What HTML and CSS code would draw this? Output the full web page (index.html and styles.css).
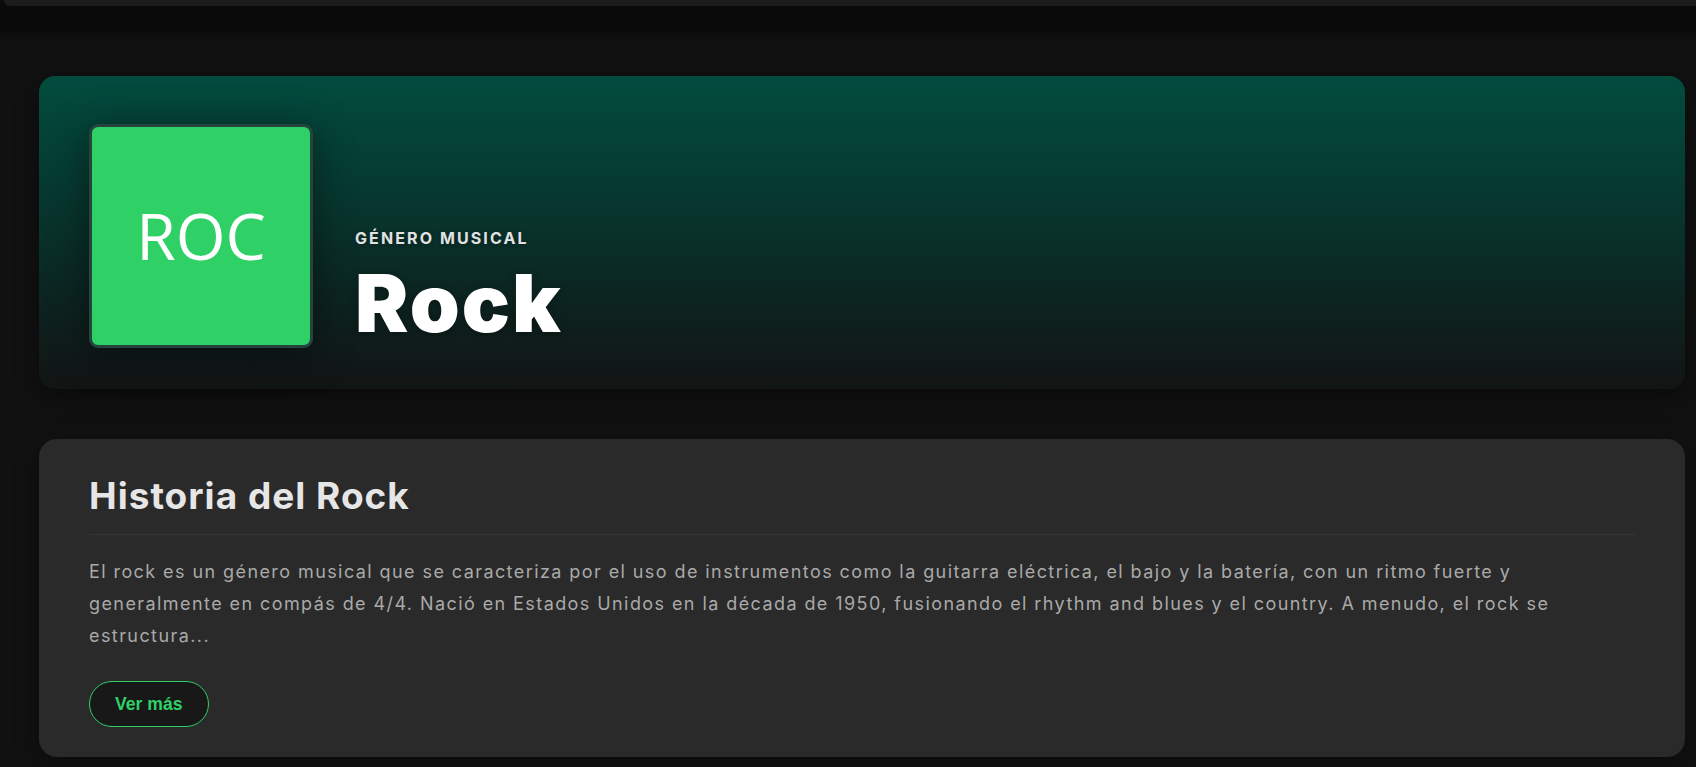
FILE: index.html
```html
<!DOCTYPE html>
<html lang="es">
<head>
<meta charset="utf-8">
<title>Rock - Género musical</title>
<link rel="stylesheet" href="styles.css">
</head>
<body>
<header class="topbar"></header>
<main class="content">
  <section class="hero">
    <div class="cover"><span class="cover-text">ROC</span></div>
    <div class="hero-info">
      <p class="hero-label">GÉNERO MUSICAL</p>
      <h1 class="hero-title">Rock</h1>
    </div>
  </section>
  <section class="card">
    <h2 class="card-title">Historia del Rock</h2>
    <p class="card-text">El rock es un género musical que se caracteriza por el uso de instrumentos como la guitarra eléctrica, el bajo y la batería, con un ritmo fuerte y generalmente en compás de 4/4. Nació en Estados Unidos en la década de 1950, fusionando el rhythm and blues y el country. A menudo, el rock se estructura...</p>
    <button class="btn-more" type="button">Ver más</button>
  </section>
</main>
</body>
</html>
```

FILE: styles.css
```css
html, body {
  margin: 0;
  padding: 0;
}

body {
  background: #111111;
  font-family: Inter, "Open Sans", sans-serif;
  height: 767px;
  overflow: hidden;
}

.topbar {
  height: 6px;
  margin-left: 4px;
  background: #1c1c1c;
  border-bottom-left-radius: 10px;
  box-shadow: 0 15px 8px 15px rgba(0, 0, 0, 0.4);
  position: relative;
  z-index: 1;
}

.content {
  padding: 70px 11px 0 39px;
  display: flex;
  flex-direction: column;
  gap: 50px;
}

.hero {
  height: 313px;
  box-sizing: border-box;
  padding: 48px 50px 41px 50px;
  border-radius: 16px;
  background: linear-gradient(180deg, #024c3e 0%, #063a31 35%, #0c2521 70%, #121414 100%);
  box-shadow: 0 8px 24px rgba(0, 0, 0, 0.45);
  display: flex;
  align-items: flex-end;
  gap: 42px;
}

.cover {
  width: 224px;
  height: 224px;
  box-sizing: border-box;
  flex-shrink: 0;
  border: 3px solid #24443d;
  border-radius: 9px;
  background: #2fd066;
  box-shadow: 0 6px 40px rgba(0, 0, 0, 0.45);
  display: flex;
  align-items: center;
  justify-content: center;
}

.cover-text {
  font-family: "Open Sans", sans-serif;
  font-size: 64px;
  color: #ffffff;
  line-height: 1;
}

.hero-info {
  display: flex;
  flex-direction: column;
}

.hero-label {
  margin: 0 0 10px 0;
  font-size: 16px;
  line-height: 20px;
  font-weight: 700;
  letter-spacing: 2.1px;
  color: #e2e2e2;
  text-shadow: 0 1px 4px rgba(0, 0, 0, 0.3);
}

.hero-title {
  margin: 0;
  font-size: 80px;
  line-height: 90px;
  font-weight: 900;
  color: #ffffff;
  letter-spacing: 2px;
  text-shadow: 0 2px 10px rgba(0, 0, 0, 0.3);
}

.card {
  background: #2a2a2a;
  border-radius: 18px;
  padding: 35px 50px 30px 50px;
  box-shadow: 0 8px 24px rgba(0, 0, 0, 0.35);
}

.card-title {
  margin: 0;
  font-size: 37px;
  line-height: 44px;
  font-weight: 700;
  letter-spacing: 1px;
  color: #e6e6e6;
  padding-bottom: 16px;
  border-bottom: 1px solid #353535;
}

.card-text {
  margin: 21px 0 29px 0;
  font-size: 18px;
  line-height: 32px;
  letter-spacing: 1.42px;
  color: #a9a9a9;
}

.btn-more {
  font-family: "Liberation Sans", Arial, sans-serif;
  font-weight: 700;
  font-size: 17.6px;
  line-height: 20px;
  color: #2fd066;
  background: #181818;
  border: 1px solid #2fd066;
  border-radius: 999px;
  padding: 12px 25px;
  cursor: pointer;
}
```
